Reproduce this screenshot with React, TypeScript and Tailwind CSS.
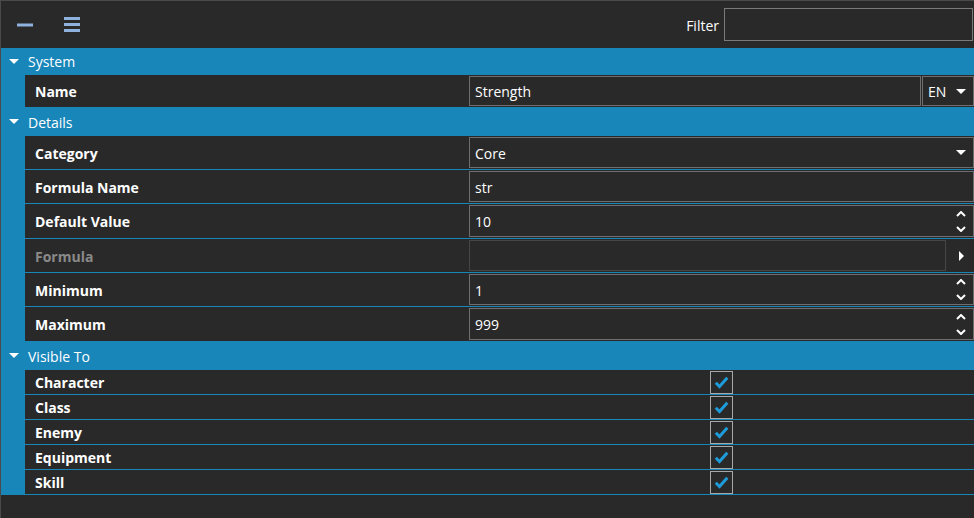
import React from "react";

const BLUE = "bg-[#1886b9]";

function Triangle() {
  return (
    <svg width="10" height="6" viewBox="0 0 10 6" className="ml-[8px] mr-[9px]">
      <path d="M0 0h10L5 5z" fill="#fff" />
    </svg>
  );
}

function SectionHeader({ title }: { title: string }) {
  return (
    <div className={`flex items-center h-[28px] ${BLUE} text-white text-[14px]`}>
      <Triangle />
      <span>{title}</span>
    </div>
  );
}

function Spinner() {
  return (
    <div className="flex flex-col items-center justify-center gap-[9px] w-[22px] mr-[1px]">
      <svg width="10" height="6" viewBox="0 0 10 6">
        <path d="M1 5l4-4 4 4" stroke="#fff" strokeWidth="2" fill="none" />
      </svg>
      <svg width="10" height="6" viewBox="0 0 10 6">
        <path d="M1 1l4 4 4-4" stroke="#fff" strokeWidth="2" fill="none" />
      </svg>
    </div>
  );
}

function DropArrow() {
  return (
    <svg width="10" height="6" viewBox="0 0 10 6" className="mr-[7px]">
      <path d="M0 0h10L5 5z" fill="#fff" />
    </svg>
  );
}

type Row = {
  label: string;
  value: string;
  kind: "text" | "combo" | "spin" | "formula" | "lang";
  disabled?: boolean;
  tall?: boolean;
};

function PropRow({ row, h }: { row: Row; h: string }) {
  return (
    <div className={`flex ${h} border-b border-[#1886b9] bg-[#292929]`}>
      <div
        className={`w-[444px] flex items-center pl-[10px] pt-[1px] font-bold text-[14px] ${
          row.disabled ? "text-[#8a8a8a]" : "text-white"
        }`}
      >
        {row.label}
      </div>
      <div className="flex-1 flex pt-[1px] pb-[1px]">
        {row.kind === "lang" ? (
          <>
            <div className="flex-1 flex items-center border border-[#6e6e6e] pl-[5px] pt-[1px] text-white text-[14px]">
              {row.value}
            </div>
            <div className="w-[52px] ml-[1px] flex items-center justify-between border border-[#6e6e6e] pl-[5px] pt-[1px] text-white text-[14px]">
              <span>EN</span>
              <DropArrow />
            </div>
          </>
        ) : row.kind === "formula" ? (
          <>
            <div className="flex-1 border border-[#464646]" />
            <div className="w-[28px] flex items-center justify-center pl-[3px]">
              <svg width="6" height="10" viewBox="0 0 6 10">
                <path d="M0 0v10l5-5z" fill="#fff" />
              </svg>
            </div>
          </>
        ) : (
          <div className="flex-1 flex items-center justify-between border border-[#6e6e6e] pl-[5px] text-white text-[14px]">
            <span className="pt-[1px]">{row.value}</span>
            {row.kind === "combo" && <DropArrow />}
            {row.kind === "spin" && <Spinner />}
          </div>
        )}
      </div>
    </div>
  );
}

function CheckRow({ label }: { label: string }) {
  return (
    <div className="flex h-[25px] border-b border-[#1886b9] bg-[#292929]">
      <div className="w-[444px] flex items-center pl-[10px] pt-[1px] font-bold text-[14px] text-white">
        {label}
      </div>
      <div className="flex-1 flex items-center justify-center">
        <div className="w-[23px] h-[23px] border border-[#a8a8a8] flex items-center justify-center">
          <svg width="15" height="13" viewBox="0 0 15 13">
            <path d="M1.8 6.8l3.7 3.7 7.8-8.8" stroke="#1e9bd9" strokeWidth="3" fill="none" />
          </svg>
        </div>
      </div>
    </div>
  );
}

const details: Row[] = [
  { label: "Category", value: "Core", kind: "combo" },
  { label: "Formula Name", value: "str", kind: "text" },
  { label: "Default Value", value: "10", kind: "spin", tall: true },
  { label: "Formula", value: "", kind: "formula", disabled: true },
  { label: "Minimum", value: "1", kind: "spin" },
  { label: "Maximum", value: "999", kind: "spin", tall: true },
];

const visibleTo = ["Character", "Class", "Enemy", "Equipment", "Skill"];

export default function App() {
  return (
    <div
      className="w-[974px] h-[518px] bg-[#292929] border-l border-t border-[#4a4a4a] flex flex-col overflow-hidden"
      style={{ fontFamily: '"Open Sans", "Noto Sans", sans-serif' }}
    >
      {/* Toolbar */}
      <div className="h-[47px] flex items-center shrink-0">
        <svg width="16" height="4" viewBox="0 0 16 4" className="ml-[16px]">
          <rect x="0" y="0.5" width="16" height="3" fill="#8fb1de" />
        </svg>
        <svg width="16" height="15" viewBox="0 0 16 15" className="ml-[31px]">
          <rect x="0" y="0" width="16" height="3" fill="#8fb1de" />
          <rect x="0" y="6" width="16" height="3" fill="#8fb1de" />
          <rect x="0" y="12" width="16" height="3" fill="#8fb1de" />
        </svg>
        <div className="flex-1" />
        <span className="text-white text-[14px] mr-[5px] pt-[1px]">Filter</span>
        <div className="w-[249px] h-[33px] border border-[#7a7a7a] mr-[1px]" />
      </div>

      <div className={`flex items-center h-[27px] ${BLUE} text-white text-[14px]`}>
        <Triangle />
        <span>System</span>
      </div>
      <div className={`${BLUE} pl-[24px]`}>
        <PropRow row={{ label: "Name", value: "Strength", kind: "lang" }} h="h-[33px]" />
      </div>

      <SectionHeader title="Details" />
      <div className={`${BLUE} pl-[24px]`}>
        {details.map((r) => (
          <PropRow key={r.label} row={r} h={r.tall ? "h-[35px]" : "h-[34px]"} />
        ))}
      </div>

      <SectionHeader title="Visible To" />
      <div className={`${BLUE} pl-[24px]`}>
        {visibleTo.map((l) => (
          <CheckRow key={l} label={l} />
        ))}
      </div>
      <div className="flex-1" />
    </div>
  );
}
